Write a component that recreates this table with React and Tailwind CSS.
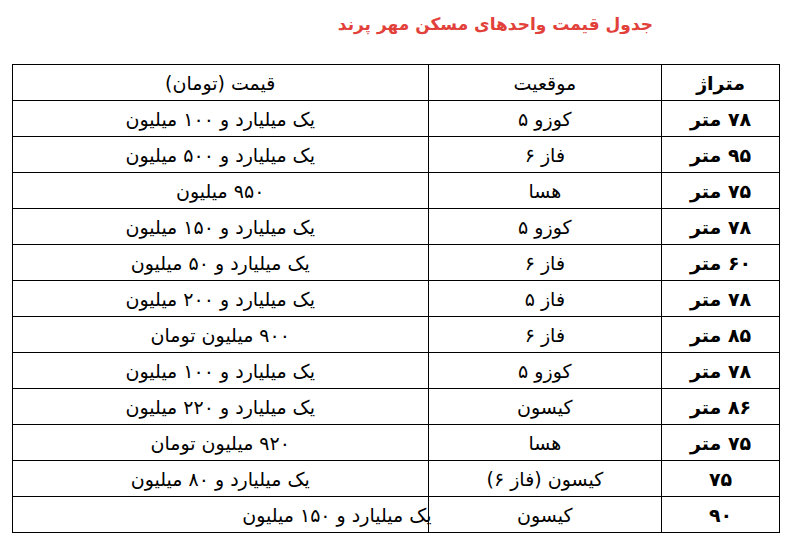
import React from 'react';

const rows = [
  ['۷۸ متر', 'کوزو ۵', 'یک میلیارد و ۱۰۰ میلیون'],
  ['۹۵ متر', 'فاز ۶', 'یک میلیارد و ۵۰۰ میلیون'],
  ['۷۵ متر', 'هسا', '۹۵۰ میلیون'],
  ['۷۸ متر', 'کوزو ۵', 'یک میلیارد و ۱۵۰ میلیون'],
  ['۶۰ متر', 'فاز ۶', 'یک میلیارد و ۵۰ میلیون'],
  ['۷۸ متر', 'فاز ۵', 'یک میلیارد و ۲۰۰ میلیون'],
  ['۸۵ متر', 'فاز ۶', '۹۰۰ میلیون تومان'],
  ['۷۸ متر', 'کوزو ۵', 'یک میلیارد و ۱۰۰ میلیون'],
  ['۸۶ متر', 'کیسون', 'یک میلیارد و ۲۲۰ میلیون'],
  ['۷۵ متر', 'هسا', '۹۲۰ میلیون تومان'],
  ['۷۵', 'کیسون (فاز ۶)', 'یک میلیارد و ۸۰ میلیون'],
];

const App = () => {
  return (
    <div dir="rtl" className="w-[790px] h-[549px] bg-white text-black" style={{ fontFamily: '"DejaVu Sans", "Noto Sans", sans-serif' }}>
      <div className="h-[64px] pr-[137px] pt-[10px]">
        <h1 className="text-[17px] font-bold text-[#e2413b] leading-[28px]">جدول قیمت واحدهای مسکن مهر پرند</h1>
      </div>

      <div className="pl-[12px] pr-[10px]">
        <table className="w-[768px] border-collapse border border-black text-[19px] leading-[24px]">
          <colgroup>
            <col className="w-[118px]" />
            <col className="w-[234px]" />
            <col className="w-[416px]" />
          </colgroup>
          <thead>
            <tr className="h-[36px]">
              <th className="border border-black font-bold text-center">متراژ</th>
              <th className="border border-black font-normal text-center">موقعیت</th>
              <th className="border border-black font-normal text-center">قیمت (تومان)</th>
            </tr>
          </thead>
          <tbody>
            {rows.map((r, i) => (
              <tr key={i} className="h-[36px]">
                <td className="border border-black font-bold text-center">{r[0]}</td>
                <td className="border border-black text-center">{r[1]}</td>
                <td className="border border-black text-center">{r[2]}</td>
              </tr>
            ))}
            <tr className="h-[36px]">
              <td className="border border-black font-bold text-center">۹۰</td>
              <td className="border border-black text-center">کیسون</td>
              <td className="border border-black text-right">
                <span className="relative -right-[4px] whitespace-nowrap">یک میلیارد و ۱۵۰ میلیون</span>
              </td>
            </tr>
          </tbody>
        </table>
      </div>
    </div>
  );
};

export default App;
